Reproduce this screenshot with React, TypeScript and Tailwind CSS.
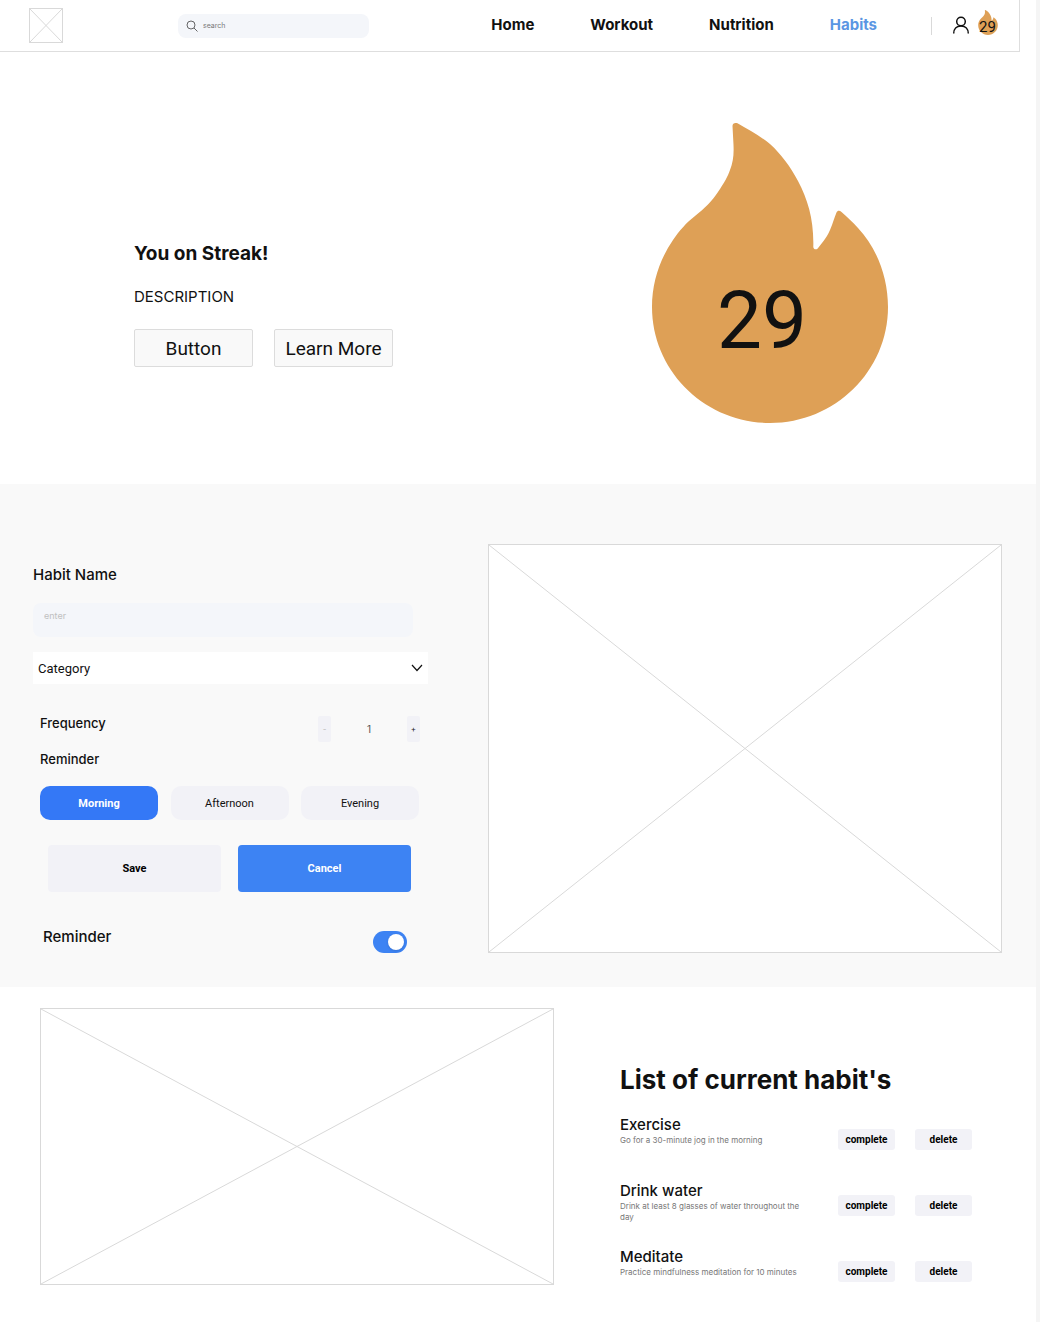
import React, { useState } from "react";

const inter = "font-['Inter',sans-serif]";
const roboto = "font-['Roboto',sans-serif]";

function Flame({ className }: { className: string }) {
  return (
    <svg viewBox="0 0 236 301" className={className} fill="#dea056" aria-hidden="true">
      <path d="M80.5 4C80.5 1.5 82.8 0.2 85.5 1.3C97 8 107 13 118 22C129 32 138 44 146 59C156 78 162 98 161.3 125C161.6 127.600 164 128 165.700 126.500C170 121 174 117 178 108C181 101 182.500 95 184.500 90.500C185.500 88.300 187.500 88 189.500 90C195 95 201 100 206 106C224 125 236 154 236 185C236 249 183 301 118 301C53 301 0 249 0 185C0 160 8 137 21 118C27 109 35 100 43 94C53 86 60 79 66 70C72 61 76 54 78 48C81 40 82 33 81.500 23Z" />
    </svg>
  );
}

function Streak({ flame, number, box }: { flame: string; number: string; box: string }) {
  return (
    <div className={`relative shrink-0 ${box}`}>
      <Flame className={flame} />
      <span className={`absolute leading-none text-[#111] ${roboto} ${number}`}>29</span>
    </div>
  );
}

function Placeholder({ className }: { className: string }) {
  return (
    <div className={`border border-[#d9d9d9] bg-white ${className}`}>
      <svg className="block h-full w-full" preserveAspectRatio="none" viewBox="0 0 100 100" aria-hidden="true">
        <path d="M0 0L100 100M100 0L0 100" stroke="#d9d9d9" strokeWidth="1" fill="none" vectorEffect="non-scaling-stroke" />
      </svg>
    </div>
  );
}

function Header() {
  return (
    <header className="mr-4 flex h-[52px] items-center border-r border-b border-[#dedede] pr-[21px] pl-[29px]">
      <Placeholder className="h-[35px] w-[34px] shrink-0" />
      <label className="ml-[115px] flex h-6 w-[191px] items-center gap-[5px] rounded-lg bg-[#f4f6fa] px-2">
        <svg viewBox="0 0 12 12" className="h-3 w-3 shrink-0" fill="none" stroke="#555" strokeWidth="0.9" aria-hidden="true">
          <circle cx="5" cy="5" r="4" />
          <path d="M8 8L11.500 11.500" />
        </svg>
        <input
          type="search"
          aria-label="Search"
          placeholder="search"
          className={`min-w-0 flex-1 bg-transparent text-[7px] leading-3 outline-none placeholder:text-[#777] ${inter}`}
        />
      </label>
      <nav className={`ml-auto flex gap-14 pb-0.5 text-[15px] leading-5 font-bold text-[#111] ${inter}`}>
        <a href="#home">Home</a>
        <a href="#workout">Workout</a>
        <a href="#nutrition">Nutrition</a>
        <a href="#habits" className="text-[#5a96e3]">Habits</a>
      </nav>
      <div className="ml-[54px] h-[18px] w-px bg-[#d9d9d9]" />
      <button type="button" aria-label="Account" className="ml-5 pb-0.5">
        <svg viewBox="0 0 18 18" className="h-[18px] w-[18px]" fill="none" stroke="#111" strokeWidth="1.500" aria-hidden="true">
          <circle cx="9" cy="5.500" r="4.300" />
          <path d="M1.700 17.500C1.700 13 4.500 10 9 10S16.300 13 16.300 17.500" />
        </svg>
      </button>
      <Streak box="mb-1.5 ml-2 h-[25px] w-5" flame="h-[25px] w-5" number="top-[10px] left-px text-[15px]" />
    </header>
  );
}

function Hero() {
  const button = `h-[38px] w-[119px] rounded-xs border border-[#dcdcdc] bg-[#f9f9f9] pt-0.5 text-[19px] leading-6 ${roboto}`;
  return (
    <section className="flex h-[432px] items-start justify-between pr-[148px] pl-[134px] text-[#111]">
      <div className={`pt-[189px] ${inter}`}>
        <h1 className="text-[19px] leading-[26px] font-bold">You on Streak!</h1>
        <p className="mt-5 text-[15px] leading-5">DESCRIPTION</p>
        <div className="mt-[22px] flex gap-[21px]">
          <button type="button" className={button}>Button</button>
          <button type="button" className={button}>Learn More</button>
        </div>
      </div>
      <Streak
        box="mt-[70px] h-[301px] w-[236px]"
        flame="h-[301px] w-[236px]"
        number="top-[159px] left-[65px] text-[80px]"
      />
    </section>
  );
}

function HabitForm() {
  const [time, setTime] = useState("Morning");
  const [count, setCount] = useState(1);
  const [on, setOn] = useState(true);
  return (
    <form className={`w-[395px] shrink-0 pt-[81px] text-[#111] ${inter}`} onSubmit={(e) => e.preventDefault()}>
      <label htmlFor="habit" className="block text-[15px] leading-5 font-medium">Habit Name</label>
      <input
        id="habit"
        placeholder="enter"
        className="mt-[18px] block h-[34px] w-[380px] rounded-lg bg-[#f4f6fa] px-[11px] pb-2.5 text-[9px] outline-none placeholder:text-[#c0c0c0]"
      />
      <div className="relative mt-[15px]">
        <select
          aria-label="Category"
          className={`block h-8 w-full appearance-none bg-white px-[5px] pt-0.5 text-[13px] ${roboto}`}
        >
          <option>Category</option>
        </select>
        <svg viewBox="0 0 12 8" className="pointer-events-none absolute top-3 right-[5px] h-2 w-3" fill="none" stroke="#111" strokeWidth="1.200" aria-hidden="true">
          <path d="M1 1L6 6.500L11 1" />
        </svg>
      </div>
      <div className="mt-[30px] flex items-start justify-between pr-2 pl-[7px]">
        <span className="text-[13px] leading-[18px] font-medium">Frequency</span>
        <div className="mt-0.5 flex h-[26px] w-[102px] items-center justify-between text-[10px] text-[#555]">
          <button type="button" aria-label="Less" className="h-[26px] w-[13px] rounded-xs bg-[#f2f2f7] text-[8px] text-[#bbb]" onClick={() => setCount(Math.max(1, count - 1))}>-</button>
          <span>{count}</span>
          <button type="button" aria-label="More" className="h-[26px] w-[13px] rounded-xs bg-[#f2f2f7] text-[8px] text-[#222]" onClick={() => setCount(count + 1)}>+</button>
        </div>
      </div>
      <div className="mt-2 pl-[7px] text-[13px] leading-[18px] font-medium">Reminder</div>
      <div className={`mt-[18px] flex justify-between pr-[9px] pl-[7px] text-[11px] ${roboto}`}>
        {["Morning", "Afternoon", "Evening"].map((t) => (
          <button
            key={t}
            type="button"
            onClick={() => setTime(t)}
            className={`h-[34px] w-[118px] rounded-[10px] pt-0.5 ${t === time ? "bg-[#3478f6] font-bold text-white" : "bg-[#f2f2f7]"}`}
          >
            {t}
          </button>
        ))}
      </div>
      <div className={`mt-[25px] flex justify-between pr-[17px] pl-[15px] text-[11px] font-bold ${roboto}`}>
        <button type="submit" className="h-[47px] w-[173px] rounded-sm bg-[#f2f2f7] pt-0.5 text-black">Save</button>
        <button type="button" className="h-[47px] w-[173px] rounded-sm bg-[#3d83f3] pt-0.5 text-white">Cancel</button>
      </div>
      <label className="mt-[35px] flex items-start justify-between pr-[21px] pl-[10px] text-[15px] leading-5 font-medium">
        Reminder
        <span className="relative mt-1 h-[22px] w-[34px]">
          <input
            type="checkbox"
            checked={on}
            onChange={() => setOn(!on)}
            className="peer block h-[22px] w-[34px] appearance-none rounded-full bg-[#ccc] checked:bg-[#3d83f3]"
          />
          <span className="pointer-events-none absolute top-[3px] left-[2px] h-4 w-4 rounded-full bg-white shadow-sm peer-checked:left-[15px]" />
        </span>
      </label>
    </form>
  );
}

const habits = [
  { name: "Exercise", text: "Go for a 30-minute jog in the morning" },
  { name: "Drink water", text: "Drink at least 8 glasses of water throughout the day" },
  { name: "Meditate", text: "Practice mindfulness meditation for 10 minutes" },
];

function HabitList() {
  const button = `h-[21px] w-[57px] rounded-[3px] bg-[#f2f2f7] text-[10px] font-bold text-black ${roboto}`;
  return (
    <div className={`w-[352px] shrink-0 pt-[75px] text-[#111] ${inter}`}>
      <h2 className="text-[26px] leading-9 font-bold whitespace-nowrap">List of current habit's</h2>
      <ul className="mt-[17px]">
        {habits.map((h) => (
          <li key={h.name} className="flex h-[66px] items-start">
            <div className="w-[192px]">
              <h3 className="text-[15px] leading-5 font-medium">{h.name}</h3>
              <p className="text-[8px] leading-[11px] text-[#777]">{h.text}</p>
            </div>
            <div className="mt-3.5 ml-auto flex gap-5">
              <button type="button" className={button}>complete</button>
              <button type="button" className={button}>delete</button>
            </div>
          </li>
        ))}
      </ul>
    </div>
  );
}

export default function App() {
  return (
    <div className="min-h-screen border-r-4 border-[#f5f5f5] bg-white">
      <Header />
      <main>
        <Hero />
        <section className="flex gap-[60px] bg-[#f9f9f9] pr-[34px] pb-[34px] pl-[33px]">
          <HabitForm />
          <Placeholder className="mt-[60px] h-[409px] min-w-0 flex-1" />
        </section>
        <section className="flex gap-[66px] pr-16 pl-10">
          <Placeholder className="mt-[21px] h-[277px] min-w-0 flex-1" />
          <HabitList />
        </section>
      </main>
    </div>
  );
}
